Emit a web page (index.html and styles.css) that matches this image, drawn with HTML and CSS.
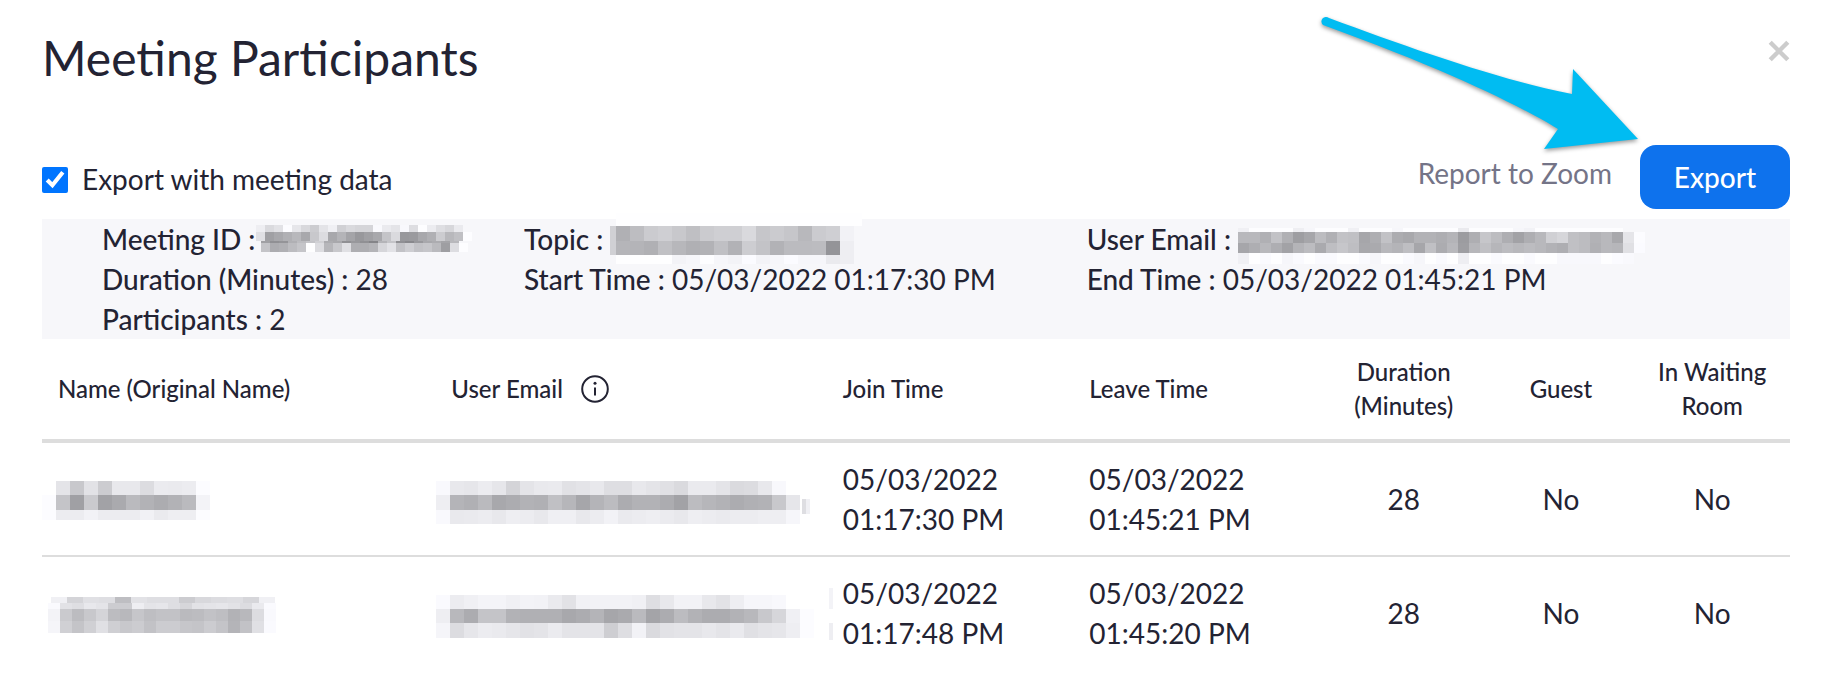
FILE: index.html
```
<!DOCTYPE html>
<html lang="en">

<head>
	<meta charset="utf-8">
	<title>Meeting Participants</title>
	<link rel="stylesheet" href="styles.css">
</head>

<body>
	<div class="dialog">
		<div class="dialog__header">
			<h1 class="dialog__title">Meeting Participants</h1>
			<button type="button" class="close" aria-label="Close">
				<svg class="close__icon" viewBox="0 0 20 20">
					<path d="M2 2L18 18M18 2L2 18" />
				</svg>
			</button>
		</div>

		<div class="toolbar">
			<input type="checkbox" id="export-meta" class="checkbox" checked />
			<label for="export-meta" class="toolbar__label">Export with meeting data</label>
			<a href="#" class="toolbar__link">Report to Zoom</a>
			<button type="button" class="button">Export</button>
		</div>

		<div class="summary">
			<div class="summary__column">
				<p><span class="summary__label">Meeting ID :</span><svg class="redacted redacted--inline" data-mosaic="meetingId"></svg></p>
				<p><span class="summary__label">Duration (Minutes) :</span> 28</p>
				<p><span class="summary__label">Participants :</span> 2</p>
			</div>
			<div class="summary__column">
				<p><span class="summary__label">Topic :</span> <svg class="redacted redacted--inline" data-mosaic="topic"></svg></p>
				<p><span class="summary__label">Start Time :</span> 05/03/2022 01:17:30 PM</p>
			</div>
			<div class="summary__column">
				<p><span class="summary__label">User Email :</span> <svg class="redacted redacted--inline" data-mosaic="hostEmail"></svg></p>
				<p><span class="summary__label">End Time :</span> 05/03/2022 01:45:21 PM</p>
			</div>
		</div>

		<table class="table">
			<thead>
				<tr>
					<th class="table__name">Name (Original Name)</th>
					<th class="table__email">
						<span class="hint">User Email
							<svg class="hint__icon" viewBox="0 0 28 28">
								<circle cx="14" cy="14" r="12.8" />
								<path d="M14 12.5V20.5" />
								<circle class="hint__dot" cx="14" cy="8.3" r="1.5" />
							</svg>
						</span>
					</th>
					<th class="table__time">Join Time</th>
					<th class="table__time">Leave Time</th>
					<th class="table__duration">Duration<br>(Minutes)</th>
					<th class="table__guest">Guest</th>
					<th class="table__waiting">In Waiting<br>Room</th>
				</tr>
			</thead>
			<tbody>
				<tr>
					<td><svg class="redacted" data-mosaic="firstName"></svg></td>
					<td><svg class="redacted" data-mosaic="firstEmail"></svg></td>
					<td>05/03/2022<br>01:17:30 PM</td>
					<td>05/03/2022<br>01:45:21 PM</td>
					<td class="table__center">28</td>
					<td class="table__center">No</td>
					<td class="table__center">No</td>
				</tr>
				<tr>
					<td><svg class="redacted" data-mosaic="secondName"></svg></td>
					<td><svg class="redacted" data-mosaic="secondEmail"></svg></td>
					<td>05/03/2022<br>01:17:48 PM</td>
					<td>05/03/2022<br>01:45:20 PM</td>
					<td class="table__center">28</td>
					<td class="table__center">No</td>
					<td class="table__center">No</td>
				</tr>
			</tbody>
		</table>

		<svg class="arrow" viewBox="0 0 320 140" aria-hidden="true">
			<path d="M9 4C90 34 180 66 252 80L253 55L318 125L224 135L238 115C200 92 130 57 3 11A4 4 0 0 1 9 4Z" />
		</svg>
	</div>
	<script src="mosaic.js"></script>
</body>

</html>
```
FILE: styles.css
```
* {
	margin: 0;
	padding: 0;
	box-sizing: border-box;
}

body {
	background-color: #fff;
	color: #232333;
	font-family: Lato, "Open Sans", sans-serif;
	font-size: 28px;
	line-height: 40px;
}

.dialog {
	position: relative;
	padding: 28px 34px 20px 42px;
}

.dialog__header {
	display: flex;
	align-items: center;
	justify-content: space-between;
	margin-bottom: 57px;
}

.dialog__title {
	font-size: 48px;
	font-weight: 400;
	line-height: 60px;
}

.close {
	width: 22px;
	height: 22px;
	margin-bottom: 14px;
	background: none;
	border: none;
	cursor: pointer;
}

.close__icon {
	display: block;
	width: 22px;
	height: 22px;
	fill: none;
	stroke: #ccc;
	stroke-width: 4;
}

.toolbar {
	display: flex;
	align-items: center;
	height: 64px;
	margin-bottom: 10px;
}

.checkbox {
	width: 26px;
	height: 26px;
	margin-top: 6px;
	accent-color: #0075ff;
}

.toolbar__label {
	margin-top: 4px;
	margin-left: 14px;
}

.toolbar__link {
	margin-bottom: 8px;
	margin-left: auto;
	color: #747487;
	text-decoration: none;
}

.button {
	width: 150px;
	height: 64px;
	margin-left: 28px;
	background-color: #0e72ed;
	color: #fff;
	border: none;
	border-radius: 16px;
	cursor: pointer;
	font-family: inherit;
	font-size: 28px;
	font-weight: 500;
}

.summary {
	display: grid;
	grid-template-columns: 3fr 4fr 5fr;
	min-height: 120px;
	padding-left: 60px;
	background-color: #f7f7fa;
}

.summary__label {
	font-weight: 500;
}

.table {
	width: 100%;
	border-collapse: separate;
	border-spacing: 0;
	table-layout: fixed;
}

.table th {
	padding: 16px;
	border-bottom: 4px solid #ddd;
	font-size: 24px;
	font-weight: 500;
	line-height: 34px;
	text-align: left;
}

.table td {
	padding: 16px;
	border-bottom: 2px solid #ddd;
}

.table tr:last-child td {
	border-bottom: none;
}

.table .table__name {
	width: 22.5%;
}

.table .table__email {
	width: 22.4%;
}

.table .table__time {
	width: 14.1%;
}

.table .table__duration {
	width: 9.6%;
}

.table .table__guest {
	width: 8.4%;
}

.table .table__waiting {
	width: 8.9%;
}

.table .table__duration,
.table .table__guest,
.table .table__waiting,
.table .table__center {
	padding-right: 0;
	padding-left: 0;
	text-align: center;
}

.hint {
	display: flex;
	align-items: center;
	gap: 18px;
}

.hint__icon {
	width: 28px;
	height: 28px;
	fill: none;
	stroke: #232333;
	stroke-width: 2;
}

.hint__icon .hint__dot {
	fill: #232333;
	stroke: none;
}

.redacted {
	display: block;
	width: 100%;
	height: 48px;
	overflow: visible;
	shape-rendering: crispEdges;
}

.redacted--inline {
	display: inline-block;
	width: 40px;
	height: 40px;
	vertical-align: top;
}

.arrow {
	position: absolute;
	top: 14px;
	right: 184px;
	width: 320px;
	height: 140px;
	overflow: visible;
	fill: #00bcf2;
	filter: drop-shadow(0 2px 2px rgba(0, 0, 0, 0.4));
	pointer-events: none;
}
```
FILE: mosaic.js
```
// Each strip: x, y, cell width, height, then the grey of every cell
const mosaics = {
	meetingId: [
		[1, 6, 9, 7, 'ee da e2 fc e6 d8 cc e4 f0 d0 d9 d5 d5 f9 ea e4 f8 dd fd ec de d7 ea'],
		[1, 13, 9, 9, 'e0 a0 a8 b0 b8 a8 c8 dc a8 b4 a4 98 a0 a8 c4 da 98 9a a8 b0 cc b8 c0 fd'],
		[6, 22, 9, 2, 'a0 90 94 b0 bc c4 d0 ac a8 90 98 90 84 b4 c4 90 88 98 a8 ac a4 b8'],
		[6, 24, 9, 9, 'c4 ac b0 bc c5 fe dc b6 c8 e0 ae ae b4 d6 e2 c2 ce c2 c6 ba 9e dd fd']
	],
	topic: [
		[6, -6, 246, 13, 'fe'],
		[0, 7, 6, 29, 'd0'],
		[6, 7, 14, 15, 'b0 bd cb cf c8 bf cb cf cf d9 c6 cb c6 b8 cb cf f2'],
		[6, 22, 14, 14, 'b5 b4 b0 c0 b7 b0 b2 c0 b2 cd c3 b2 bb bb bc 94 ee'],
		[6, 36, 14, 9, 'fe fe fe fe f3 f6 fd f6 f3 fb f3 f6 fb f6 f6 ea ee']
	],
	hostEmail: [
		[0, 9, 11, 4, 'f0 fd fd fd fd ee f6 fd fd fd f0 fd fd fd f6 fd fd fd fd fd ea fd fd fd fd f6 f2 fd fd fd fd fd fd fd fd'],
		[0, 13, 11, 11, 'b8 b8 b0 c2 b0 9e a6 bc b0 c2 c0 a6 ae c2 ac a8 b2 b2 ae b4 9c ae c6 bc ae a2 ae b8 d0 d6 c0 bc b2 b8 a8 e5 fc'],
		[0, 24, 11, 10, 'a6 ae b8 ae a2 b4 bc aa be c6 be a8 aa b8 b4 be a6 c0 ac b8 9e b6 c0 b6 bc b8 bc b8 b2 ae c0 bc b0 b8 b6 e0 fb'],
		[0, 34, 11, 11, 'f0 fe fa fe f6 fa fe fa fa fe fe fa f6 fe fe fa f6 fe fa fe ee fe fe fa fe fe fa fe fe f8 f8 f8 f8 fe fb f9']
	],
	firstName: [
		[-16, 20, 14, 25, 'fc'],
		[-2, 6, 14, 14, 'e4 c8 e2 cc e8 e8 dc eb ea ec fc'],
		[-2, 20, 14, 15, 'c4 a0 ca a2 aa ba b2 ac b2 ba f3'],
		[-2, 35, 14, 10, 'ec ec f2 ec ec ec f1 ea ee ee fc']
	],
	firstEmail: [
		[-15, 6, 14, 14, 'f9 e8 e6 ec e6 d4 e4 e9 ea e1 e4 e8 de de e8 e4 e0 da ea ea e4 da dc e8 f8'],
		[-15, 20, 14, 15, 'ee b4 b0 ba a8 ac b2 b0 c0 b6 a6 b4 bc ac b2 b2 ac a2 bc b6 b2 ac b0 b2 c8 e6'],
		[-15, 35, 14, 14, 'f9 e9 ea ec e8 ee ec e8 ef ef e8 ec f2 ea ec ee eb e8 ee ec ea ec ec ee ee f6'],
		[351, 24, 4, 15, 'de f0']
	],
	secondName: [
		[-7, 8, 16, 6, 'f0 d4 e0 de be e2 de de cc d8 dc de d6 f0'],
		[-10, 14, 12, 6, 'fa e2 de e8 e4 cc cc ee e4 e6 de d6 e2 e4 e6 e2 dc ea fa'],
		[-10, 20, 12, 12, 'f3 ca bc c8 d4 bc b8 c6 be c2 c2 ba bc c2 be b2 b8 dc f9'],
		[-10, 32, 12, 12, 'f5 d0 c4 d0 e0 cf c8 cc c2 cc cc c6 c4 cc c4 b4 c2 e0 fa']
	],
	secondEmail: [
		[-15, 6, 14, 14, 'fa ec f0 f4 f4 f0 f3 f2 ea e2 f1 f2 f2 f2 f0 de e8 f2 f2 e8 e2 ee f6 f6 f8'],
		[-15, 20, 14, 14, 'ee b8 ac c4 c4 b2 b0 b0 b0 a8 ac b4 a6 aa ba a4 ac bc b2 ac ac b2 b8 c8 d6 f0 fc'],
		[-15, 34, 14, 15, 'f5 dc e6 ec ea e6 e2 e4 eb e4 e4 e4 ce de f2 da e2 e4 e4 e8 e4 ea e0 e4 e6 ee fc'],
		[378, -1, 4, 21, 'f3'],
		[378, 34, 4, 17, 'ee']
	]
};

document.querySelectorAll('[data-mosaic]').forEach((svg) => {
	mosaics[svg.dataset.mosaic].forEach(([x, y, width, height, shades]) => {
		shades.split(' ').forEach((shade, index) => {
			const rect = document.createElementNS('http://www.w3.org/2000/svg', 'rect');
			const grey = parseInt(shade, 16);
			rect.setAttribute('x', x + index * width);
			rect.setAttribute('y', y);
			rect.setAttribute('width', width);
			rect.setAttribute('height', height);
			rect.setAttribute('fill', `rgb(${grey}, ${grey}, ${Math.min(grey + 4, 255)})`);
			svg.appendChild(rect);
		});
	});
});
```
